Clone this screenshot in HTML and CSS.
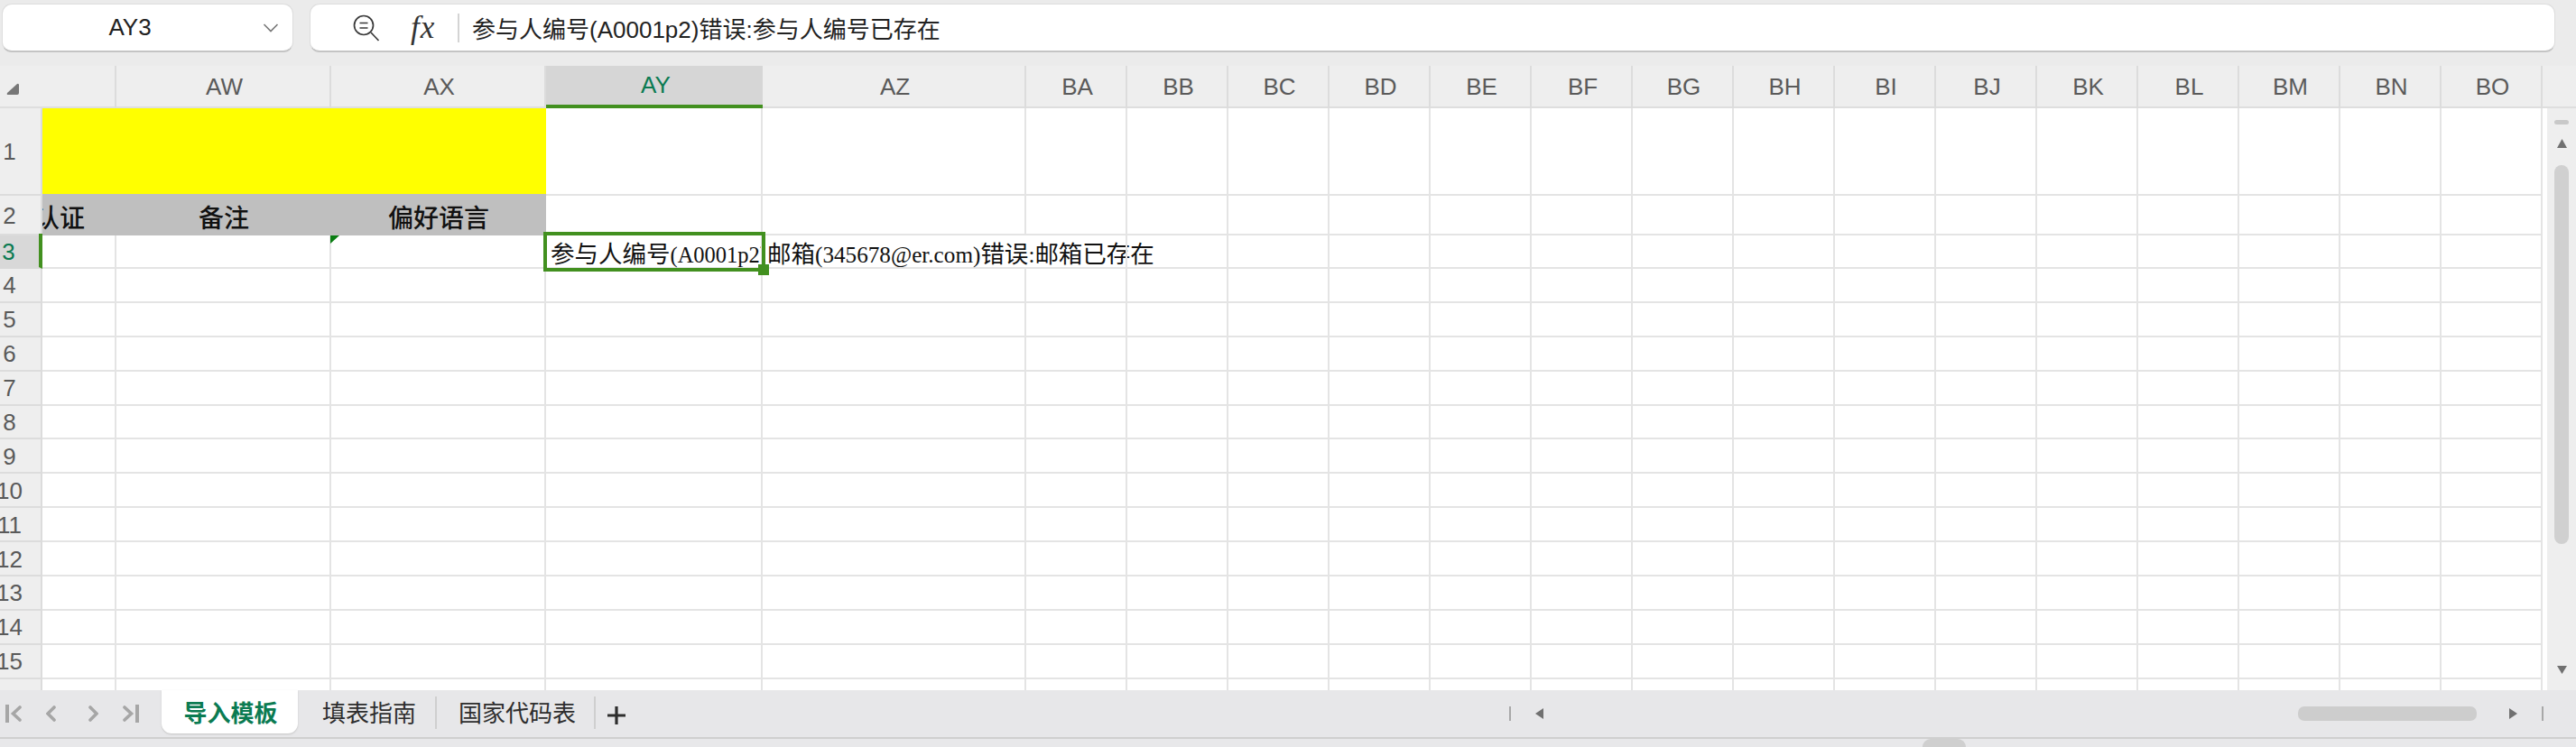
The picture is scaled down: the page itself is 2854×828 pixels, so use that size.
FILE: index.html
```html
<!DOCTYPE html>
<html lang="zh">
<head>
<meta charset="utf-8">
<title>导入模板</title>
<link rel="stylesheet" href="styles.css">
</head>
<body>
<div class="app">
  <div class="topbar">
    <div class="namebox">
      <span class="cellref">AY3</span>
      <svg class="chevron" width="18" height="10" viewBox="0 0 18 10"><path d="M1.5 1 L9 8.5 L16.5 1" fill="none" stroke="#777" stroke-width="1.6"/></svg>
    </div>
    <div class="formulabox">
      <svg class="zoomicon" width="32" height="32" viewBox="0 0 32 32"><circle cx="13" cy="13" r="10.5" fill="none" stroke="#3a3a3a" stroke-width="1.7"/><path d="M8.500 10.500h9M8.500 16h9M21 21l8.500 9" fill="none" stroke="#3a3a3a" stroke-width="1.7"/></svg>
      <span class="fx">fx</span>
      <span class="fdivider"></span>
      <span class="formula">参与人编号(A0001p2)错误:参与人编号已存在</span>
    </div>
  </div>

  <div class="colheads grid">
    <div class="corner"><svg width="16" height="16" viewBox="0 0 16 16"><path d="M13 2 L2 12 Q1 14 3 14 H13 Q15 14 15 12 V3 Q14.500 1 13 2Z" fill="#777"/></svg></div>
    <div class="colhead"></div>
    <div class="colhead">AW</div>
    <div class="colhead">AX</div>
    <div class="colhead active">AY</div>
    <div class="colhead">AZ</div>
    <div class="colhead">BA</div><div class="colhead">BB</div><div class="colhead">BC</div><div class="colhead">BD</div><div class="colhead">BE</div>
    <div class="colhead">BF</div><div class="colhead">BG</div><div class="colhead">BH</div><div class="colhead">BI</div><div class="colhead">BJ</div>
    <div class="colhead">BK</div><div class="colhead">BL</div><div class="colhead">BM</div><div class="colhead">BN</div><div class="colhead">BO</div>
    <div class="scrollhead"></div>
  </div>

  <div class="body">
    <div class="sheet">
      <div class="grid row r1"><b class="rowhead">1</b><div class="yellow"></div><i></i><i></i><i></i><i></i><i></i><i></i><i></i><i></i><i></i><i></i><i></i><i></i><i></i><i></i><i></i><i></i><i></i></div>
      <div class="grid row r2"><b class="rowhead">2</b><div class="hcell clipright">认证</div><div class="hcell">备注</div><div class="hcell">偏好语言</div><i></i><i></i><i></i><i></i><i></i><i></i><i></i><i></i><i></i><i></i><i></i><i></i><i></i><i></i><i></i><i></i><i></i></div>
      <div class="grid row r3"><b class="rowhead current">3</b><i></i><i></i><i class="comment"></i><i class="selected"><span class="cliptext"><span class="han">参与人编号</span>(A0001p2)<span class="han">错误</span>:<span class="han">参与人编号已存在</span></span><span class="selbox"></span><span class="handle"></span></i><i class="overflow"><span class="cliptext free"><span class="han">邮箱</span>(345678@er.com)<span class="han">错误</span>:<span class="han">邮箱已存在</span></span></i><i class="noborder"></i><i></i><i></i><i></i><i></i><i></i><i></i><i></i><i></i><i></i><i></i><i></i><i></i><i></i><i></i></div>
      <div class="grid row"><b class="rowhead">4</b><i></i><i></i><i></i><i></i><i></i><i></i><i></i><i></i><i></i><i></i><i></i><i></i><i></i><i></i><i></i><i></i><i></i><i></i><i></i><i></i></div>
      <div class="grid row"><b class="rowhead">5</b><i></i><i></i><i></i><i></i><i></i><i></i><i></i><i></i><i></i><i></i><i></i><i></i><i></i><i></i><i></i><i></i><i></i><i></i><i></i><i></i></div>
      <div class="grid row"><b class="rowhead">6</b><i></i><i></i><i></i><i></i><i></i><i></i><i></i><i></i><i></i><i></i><i></i><i></i><i></i><i></i><i></i><i></i><i></i><i></i><i></i><i></i></div>
      <div class="grid row"><b class="rowhead">7</b><i></i><i></i><i></i><i></i><i></i><i></i><i></i><i></i><i></i><i></i><i></i><i></i><i></i><i></i><i></i><i></i><i></i><i></i><i></i><i></i></div>
      <div class="grid row"><b class="rowhead">8</b><i></i><i></i><i></i><i></i><i></i><i></i><i></i><i></i><i></i><i></i><i></i><i></i><i></i><i></i><i></i><i></i><i></i><i></i><i></i><i></i></div>
      <div class="grid row"><b class="rowhead">9</b><i></i><i></i><i></i><i></i><i></i><i></i><i></i><i></i><i></i><i></i><i></i><i></i><i></i><i></i><i></i><i></i><i></i><i></i><i></i><i></i></div>
      <div class="grid row"><b class="rowhead">10</b><i></i><i></i><i></i><i></i><i></i><i></i><i></i><i></i><i></i><i></i><i></i><i></i><i></i><i></i><i></i><i></i><i></i><i></i><i></i><i></i></div>
      <div class="grid row"><b class="rowhead">11</b><i></i><i></i><i></i><i></i><i></i><i></i><i></i><i></i><i></i><i></i><i></i><i></i><i></i><i></i><i></i><i></i><i></i><i></i><i></i><i></i></div>
      <div class="grid row"><b class="rowhead">12</b><i></i><i></i><i></i><i></i><i></i><i></i><i></i><i></i><i></i><i></i><i></i><i></i><i></i><i></i><i></i><i></i><i></i><i></i><i></i><i></i></div>
      <div class="grid row"><b class="rowhead">13</b><i></i><i></i><i></i><i></i><i></i><i></i><i></i><i></i><i></i><i></i><i></i><i></i><i></i><i></i><i></i><i></i><i></i><i></i><i></i><i></i></div>
      <div class="grid row"><b class="rowhead">14</b><i></i><i></i><i></i><i></i><i></i><i></i><i></i><i></i><i></i><i></i><i></i><i></i><i></i><i></i><i></i><i></i><i></i><i></i><i></i><i></i></div>
      <div class="grid row"><b class="rowhead">15</b><i></i><i></i><i></i><i></i><i></i><i></i><i></i><i></i><i></i><i></i><i></i><i></i><i></i><i></i><i></i><i></i><i></i><i></i><i></i><i></i></div>
      <div class="grid row"><b class="rowhead"></b><i></i><i></i><i></i><i></i><i></i><i></i><i></i><i></i><i></i><i></i><i></i><i></i><i></i><i></i><i></i><i></i><i></i><i></i><i></i><i></i></div>
    </div>
    <div class="vscroll">
      <span class="vgrip"></span>
      <svg class="varrow up" width="11" height="10" viewBox="0 0 11 10"><path d="M5.500 0 L11 10 H0Z" fill="#707070"/></svg>
      <span class="vthumb"></span>
      <svg class="varrow down" width="11" height="9" viewBox="0 0 11 9"><path d="M0 0 H11 L5.500 9Z" fill="#707070"/></svg>
    </div>
  </div>

  <div class="tabbar">
    <div class="tabnav">
      <svg class="nav-first" width="18" height="20" viewBox="0 0 18 20"><path d="M2 0v20" stroke="#a6a6a6" stroke-width="4"/><path d="M16 3 L8.500 10 L16 17" fill="none" stroke="#a6a6a6" stroke-width="3.6" stroke-linecap="round"/></svg>
      <svg class="nav-prev" width="11" height="20" viewBox="0 0 11 20"><path d="M9 3 L2 10 L9 17" fill="none" stroke="#a6a6a6" stroke-width="3.6" stroke-linecap="round"/></svg>
      <svg class="nav-next" width="11" height="20" viewBox="0 0 11 20"><path d="M2 3 L9 10 L2 17" fill="none" stroke="#a6a6a6" stroke-width="3.6" stroke-linecap="round"/></svg>
      <svg class="nav-last" width="18" height="20" viewBox="0 0 18 20"><path d="M2 3 L9.500 10 L2 17" fill="none" stroke="#a6a6a6" stroke-width="3.6" stroke-linecap="round"/><path d="M16 0v20" stroke="#a6a6a6" stroke-width="4"/></svg>
    </div>
    <div class="tab active">导入模板</div>
    <div class="tab guide">填表指南</div>
    <div class="tabsep"></div>
    <div class="tab codes">国家代码表</div>
    <div class="tabsep"></div>
    <svg class="addtab" width="20" height="20" viewBox="0 0 20 20"><path d="M10 0v20M0 10h20" stroke="#2e2e2e" stroke-width="3.2"/></svg>
    <div class="hscroll">
      <span class="hbar"></span>
      <svg width="10" height="12" viewBox="0 0 10 12"><path d="M10 0 V12 L1 6Z" fill="#707070"/></svg>
      <span class="hspace"></span>
      <span class="hthumb"></span>
      <svg width="10" height="12" viewBox="0 0 10 12"><path d="M0 0 V12 L9 6Z" fill="#707070"/></svg>
      <span class="hbar"></span>
    </div>
  </div>
  <div class="statusstrip"><span class="bump"></span></div>
</div>
</body>
</html>
```
FILE: styles.css
```css
* { box-sizing: border-box; }
html, body { margin: 0; padding: 0; }
body { background: #ececec; font-family: "Liberation Sans", "Noto Sans CJK SC", sans-serif; color: #222; overflow: hidden; }
.app { width: 2854px; height: 828px; display: flex; flex-direction: column; overflow: hidden; }

.topbar { height: 73px; flex: none; display: flex; gap: 18px; padding: 4px 23px 0 2px; background: #ebebeb; }
.namebox, .formulabox { height: 54px; background: #fff; border: 1px solid #ddd; border-bottom: 2px solid #c4c4c4; border-radius: 11px; display: flex; align-items: center; }
.namebox { width: 323px; flex: none; position: relative; padding-right: 15px; }
.cellref { flex: 1; text-align: center; font-size: 26px; padding-right: 6px; color: #222; }
.chevron { flex: none; }
.formulabox { flex: 1; padding-left: 46px; }
.zoomicon { flex: none; }
.fx { width: 52px; margin-left: 33px; font: italic 35px "Liberation Serif", serif; letter-spacing: 1px; color: #333; flex: none; }
.fdivider { width: 2px; height: 32px; background: #d4d4d4; flex: none; margin-right: 14px; }
.formula { font-size: 26px; color: #222; white-space: nowrap; }

.grid { display: grid; grid-template-columns: 47px 82px 238px 238px 240px 292px repeat(15, 112px); }
.colheads { height: 47px; flex: none; background: #eeeeee; grid-template-columns: 47px 82px 238px 238px 240px 292px repeat(15, 112px) 37px; box-shadow: inset 0 -2px 0 #dedede; }
.corner { display: flex; align-items: flex-end; padding: 0 0 13px 6px; }
.colhead { display: flex; align-items: center; justify-content: center; font-size: 26px; color: #5a5a5a; border-right: 2px solid #dcdcdc; padding: 0 0 1px 3px; }
.colhead.active { background: #d6d6d6; border-right: 0; border-bottom: 4px solid #42901f; color: #0b7b52; padding: 0 0 0 3px; }

.body { height: 645px; flex: none; display: flex; overflow: hidden; }
.sheet { width: 2822px; flex: none; background: #fff; overflow: hidden; }
.row { grid-auto-rows: 37.9px; }
.r1 { grid-auto-rows: 97px; }
.r2 { grid-auto-rows: 44px; }
.r3 { grid-auto-rows: 37px; }
.row i { display: block; border-right: 2px solid #e4e4e4; border-bottom: 2px solid #e4e4e4; font-style: normal; min-width: 0; }
.rowhead { display: flex; align-items: center; justify-content: center; background: #eeeeee; border-right: 2px solid #dcdcdc; border-bottom: 2px solid #dcdcdc; font-size: 26px; font-weight: 400; color: #5a5a5a; padding: 2px 24px 0 0; white-space: nowrap; }
.rowhead.current { position: relative; background: #d8d8d8; color: #0b7b52; border-right: 4px solid #42901f; border-bottom-color: #d8d8d8; }
.rowhead.current::before { content: ""; position: absolute; right: -4px; top: -2px; width: 4px; height: 2px; background: #42901f; }
.yellow { grid-column: span 3; background: #ffff00; margin-bottom: 2px; }
.hcell { background: #bfbfbf; display: flex; align-items: center; justify-content: center; font-size: 28px; font-weight: 500; color: #111; overflow: hidden; white-space: nowrap; margin-top: -2px; padding-top: 3px; }
.clipright { justify-content: flex-end; padding-right: 35px; }

.row i.comment { position: relative; }
.comment::before { content: ""; position: absolute; left: -1px; top: 0; width: 10px; height: 9px; background: #0a7d12; clip-path: polygon(0 0, 100% 0, 0 100%); }
.row i.selected { position: relative; overflow: visible; }
.cliptext { display: block; font: 24.5px/33px "Liberation Serif", serif; color: #111; white-space: nowrap; }
.han { font-family: "Noto Sans CJK SC", sans-serif; font-size: 26.5px; }
.selected .cliptext { width: 238px; overflow: hidden; padding-left: 5px; padding-top: 2px; }
.cliptext.free { padding-left: 5px; padding-top: 2px; font-size: 25.2px; }
.row i.overflow { border-right: 0; overflow: visible; }
.selbox { position: absolute; left: -3px; top: -4px; width: 246px; height: 44px; border: 4px solid #42901f; }
.handle { position: absolute; left: 235px; top: 32px; width: 12px; height: 12px; background: #42901f; }

.vscroll { flex: 1; background: #eeeeee; display: flex; flex-direction: column; align-items: center; padding-top: 13px; }
.vgrip { width: 16px; height: 5px; border-radius: 3px; background: #c8c8c8; flex: none; }
.varrow.up { margin-top: 16px; flex: none; }
.vthumb { width: 16px; height: 420px; margin-top: 19px; border-radius: 8px; background: #d0d0d0; flex: none; }
.varrow.down { margin-top: 135px; flex: none; }

.tabbar { height: 54px; flex: none; display: flex; align-items: flex-start; background: #e7e7e9; border-bottom: 2px solid #cfcfcf; }
.tabnav { width: 179px; flex: none; height: 52px; display: flex; align-items: center; padding-left: 6px; }
.tabnav svg { flex: none; }
.nav-prev { margin-left: 27px; }
.nav-next { margin-left: 36px; }
.nav-last { margin-left: 27px; }
.tab { font-size: 26px; line-height: 52px; height: 48px; color: #2e2e2e; white-space: nowrap; flex: none; }
.tab.active { width: 151px; background: #fff; color: #0b7b52; font-weight: 700; text-align: center; padding-left: 2px; border-radius: 0 0 11px 11px; box-shadow: 0 1px 2px #c4c4c4; }
.tab.guide { margin-left: 27px; width: 125px; }
.tab.codes { margin-left: 24px; width: 150px; }
.tabsep { width: 2px; height: 36px; margin-top: 7px; background: #cfcfcf; flex: none; }
.addtab { margin: 18px 0 0 13px; flex: none; }
.hscroll { flex: 1; height: 52px; display: flex; align-items: center; padding: 0 36px 0 979px; }
.hscroll svg { flex: none; }
.hbar { width: 2px; height: 16px; background: #a8a8a8; flex: none; }
.hbar:first-child { margin-right: 26px; }
.hbar:last-child { margin-left: 26px; }
.hspace { flex: 1; }
.hthumb { width: 198px; height: 16px; margin-right: 36px; background: #cdcdcd; border-radius: 7px; flex: none; }

.statusstrip { flex: 1; background: #e8e8ea; padding-left: 2130px; }
.bump { display: block; width: 48px; height: 9px; background: #cfcfcf; border-radius: 14px 14px 0 0; }
```
